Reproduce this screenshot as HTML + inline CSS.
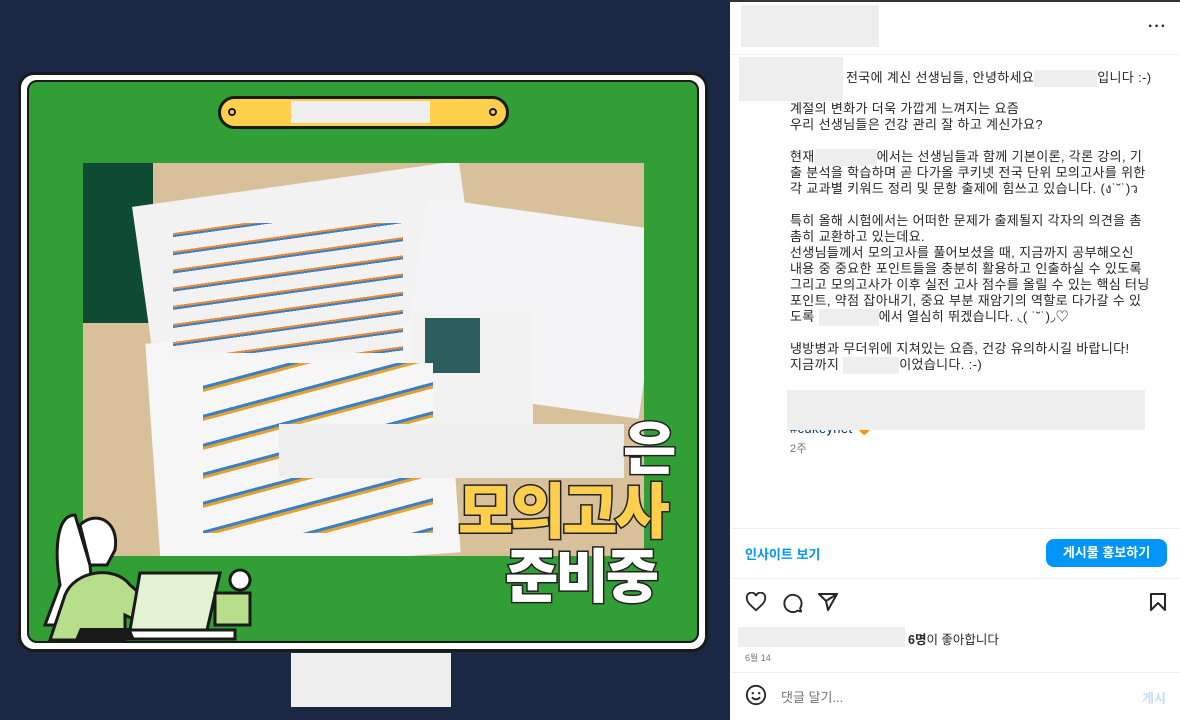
<!DOCTYPE html><html><head><meta charset="utf-8"><style>
*{margin:0;padding:0;box-sizing:border-box}
body{width:1180px;height:720px;overflow:hidden;background:#1b2843;font-family:"Liberation Sans","Noto Sans CJK KR",sans-serif;position:relative}
.a{position:absolute}
.g{background:#eeeeee;position:absolute}
.t{position:absolute;left:790px;font-size:13px;letter-spacing:0.35px;color:#262626;white-space:nowrap;line-height:16px}
.big{position:absolute;font-weight:900;font-family:"Noto Sans CJK KR",sans-serif;-webkit-text-stroke:3px #222;paint-order:stroke fill;line-height:1}
</style></head><body>
<div class="a" style="left:18px;top:72px;width:690px;height:580px;background:#fff;border:3px solid #1a1a1a;border-radius:16px"></div>
<div class="a" style="left:27px;top:80px;width:672px;height:563px;background:#319f35;border:2px solid #1a1a1a;border-radius:10px"></div>
<div class="a" style="left:218px;top:96px;width:291px;height:33px;background:#fecf4d;border:3px solid #1a1a1a;border-radius:17px"></div>
<div class="a" style="left:228px;top:108px;width:8px;height:8px;border:2px solid #1a1a1a;border-radius:50%"></div>
<div class="a" style="left:489px;top:108px;width:8px;height:8px;border:2px solid #1a1a1a;border-radius:50%"></div>
<div class="g" style="left:291px;top:101px;width:139px;height:22px"></div>
<div class="a" style="left:83px;top:163px;width:561px;height:393px;background:#d7c09a;overflow:hidden">
 <div class="a" style="left:0;top:0;width:70px;height:160px;background:#0f4a33"></div>
 <div class="a" style="left:60px;top:20px;width:330px;height:180px;background:#f2f2f2;transform:rotate(-8deg)"></div>
 <div class="a" style="left:70px;top:170px;width:300px;height:230px;background:#f6f6f6;transform:rotate(-4deg)"></div>
 <div class="a" style="left:330px;top:50px;width:240px;height:190px;background:#f4f4f6;transform:rotate(8deg)"></div>
 <div class="a" style="left:330px;top:150px;width:120px;height:130px;background:#f2f2f2"></div>
 <div class="a" style="left:342px;top:155px;width:55px;height:55px;background:#2b5d5d"></div>
 <div class="a" style="left:90px;top:60px;width:230px;height:130px;background:repeating-linear-gradient(172deg,#f2f2f2 0 10px,#e88a3a 10px 12px,#3b7fc4 12px 14px,#f2f2f2 14px 18px)"></div>
 <div class="a" style="left:120px;top:200px;width:230px;height:170px;background:repeating-linear-gradient(165deg,#f6f6f6 0 22px,#3b7fc4 22px 25px,#e3a130 25px 28px)"></div>
</div>
<div class="g" style="left:279px;top:424px;width:345px;height:54px"></div>
<div class="big" style="left:623px;top:415px;font-size:58px;color:#fff">은</div>
<div class="big" style="left:458px;top:478px;font-size:60px;color:#fecf4d;letter-spacing:-3px">모의고사</div>
<div class="big" style="left:505px;top:543px;font-size:58px;color:#fff;letter-spacing:-3px">준비중</div>
<svg class="a" style="left:35px;top:505px" width="230" height="140" viewBox="0 0 230 140">
<path d="M40 10 C20 10 20 50 25 80 L10 120 L60 120 L55 60 Z" fill="#fff" stroke="#1a1a1a" stroke-width="3"/>
<path d="M45 20 C60 5 85 15 80 45 L72 60 L55 60 Z" fill="#fff" stroke="#1a1a1a" stroke-width="3"/>
<path d="M30 90 C40 65 80 60 95 80 L130 110 L120 125 L90 110 L90 135 L15 135 Z" fill="#b7df8b" stroke="#1a1a1a" stroke-width="3"/>
<path d="M105 68 L185 68 L172 125 L95 125 Z" fill="#e2f3d4" stroke="#1a1a1a" stroke-width="3"/>
<path d="M80 125 L200 125 L200 134 L80 134 Z" fill="#fff" stroke="#1a1a1a" stroke-width="3"/>
<path d="M180 88 L215 88 L215 120 L180 120 Z" fill="#b7df8b" stroke="#1a1a1a" stroke-width="3"/>
<circle cx="205" cy="75" r="10" fill="#fff" stroke="#1a1a1a" stroke-width="3"/>
<path d="M40 135 L45 123 L95 123 L100 135Z" fill="#1a1a1a"/>
</svg>
<div class="g" style="left:291px;top:653px;width:160px;height:54px"></div>
<div class="a" style="left:730px;top:0;width:450px;height:720px;background:#fff"></div>
<div class="a" style="left:730px;top:0;width:450px;height:2px;background:#333"></div>
<div class="g" style="left:741px;top:5px;width:138px;height:42px"></div>
<div class="a" style="left:1148px;top:18px;font-size:16px;font-weight:bold;letter-spacing:1px;color:#262626">···</div>
<div class="a" style="left:731px;top:54px;width:449px;height:1px;background:#efefef"></div>
<div class="g" style="left:739px;top:57px;width:104px;height:44px"></div>
<div class="t" style="left:846px;top:70px">전국에 계신 선생님들, 안녕하세요<span style="display:inline-block;width:63px;height:17px;background:#eee;vertical-align:middle"></span>입니다 :-)</div>
<div class="t" style="top:101px">계절의 변화가 더욱 가깝게 느껴지는 요즘</div>
<div class="t" style="top:117px">우리 선생님들은 건강 관리 잘 하고 계신가요?</div>
<div class="t" style="top:149px">현재<span style="display:inline-block;width:62px;height:17px;background:#eee;vertical-align:middle"></span>에서는 선생님들과 함께 기본이론, 각론 강의, 기</div>
<div class="t" style="top:165px">출 분석을 학습하며 곧 다가올 쿠키넷 전국 단위 모의고사를 위한</div>
<div class="t" style="top:181px">각 교과별 키워드 정리 및 문항 출제에 힘쓰고 있습니다. (ง˙˘˙)ว</div>
<div class="t" style="top:213px">특히 올해 시험에서는 어떠한 문제가 출제될지 각자의 의견을 촘</div>
<div class="t" style="top:229px">촘히 교환하고 있는데요.</div>
<div class="t" style="top:245px">선생님들께서 모의고사를 풀어보셨을 때, 지금까지 공부해오신</div>
<div class="t" style="top:261px">내용 중 중요한 포인트들을 충분히 활용하고 인출하실 수 있도록</div>
<div class="t" style="top:277px">그리고 모의고사가 이후 실전 고사 점수를 올릴 수 있는 핵심 터닝</div>
<div class="t" style="top:293px">포인트, 약점 잡아내기, 중요 부분 재암기의 역할로 다가갈 수 있</div>
<div class="t" style="top:309px">도록 <span style="display:inline-block;width:60px;height:17px;background:#eee;vertical-align:middle"></span>에서 열심히 뛰겠습니다. ◟( ˙˘˙)◞♡</div>
<div class="t" style="top:341px">냉방병과 무더위에 지쳐있는 요즘, 건강 유의하시길 바랍니다!</div>
<div class="t" style="top:357px">지금까지 <span style="display:inline-block;width:56px;height:17px;background:#eee;vertical-align:middle"></span>이었습니다. :-)</div>
<div class="t" style="top:421px;color:#00376b">#cukeynet 🧡</div>
<div class="g" style="left:787px;top:390px;width:358px;height:40px"></div>
<div class="t" style="top:441px;font-size:11px;color:#737373">2주</div>
<div class="a" style="left:731px;top:528px;width:449px;height:1px;background:#efefef"></div>
<div class="a" style="left:745px;top:544px;font-size:13px;font-weight:bold;color:#0095f6">인사이트 보기</div>
<div class="a" style="left:1046px;top:539px;width:121px;height:28px;background:#0095f6;border-radius:8px;color:#fff;font-size:13px;font-weight:bold;text-align:center;line-height:28px">게시물 홍보하기</div>
<div class="a" style="left:731px;top:578px;width:449px;height:1px;background:#efefef"></div>
<svg class="a" style="left:745px;top:592px" width="22" height="20" viewBox="0 0 24 22"><path d="M12 20 C5 14 2 11 2 7 A5 5 0 0 1 12 4.5 A5 5 0 0 1 22 7 C22 11 19 14 12 20Z" fill="none" stroke="#262626" stroke-width="2"/></svg>
<svg class="a" style="left:781px;top:592px" width="22" height="21" viewBox="0 0 22 22"><path d="M19.5 17 A9 9 0 1 0 17 19.5 L20.5 20.5Z" fill="none" stroke="#262626" stroke-width="2" stroke-linejoin="round"/></svg>
<svg class="a" style="left:817px;top:592px" width="22" height="20" viewBox="0 0 22 20"><path d="M2 2 L20 2 L11 18 L9 9 Z M9 9 L20 2" fill="none" stroke="#262626" stroke-width="2" stroke-linejoin="round"/></svg>
<svg class="a" style="left:1149px;top:592px" width="18" height="20" viewBox="0 0 18 20"><path d="M2 2 H16 V18 L9 11 L2 18Z" fill="none" stroke="#262626" stroke-width="2" stroke-linejoin="round"/></svg>
<div class="g" style="left:738px;top:627px;width:167px;height:20px"></div>
<div class="a" style="left:908px;top:629px;font-size:12.5px;color:#262626"><b>6명</b>이 좋아합니다</div>
<div class="a" style="left:745px;top:651px;font-size:9px;color:#737373">6월 14</div>
<div class="a" style="left:731px;top:672px;width:449px;height:1px;background:#efefef"></div>
<svg class="a" style="left:745px;top:684px" width="22" height="22" viewBox="0 0 24 24"><circle cx="12" cy="12" r="10" fill="none" stroke="#262626" stroke-width="2"/><circle cx="8.5" cy="10" r="1.3" fill="#262626"/><circle cx="15.5" cy="10" r="1.3" fill="#262626"/><path d="M7.5 14.5 Q12 19 16.5 14.5" fill="none" stroke="#262626" stroke-width="2"/></svg>
<div class="a" style="left:781px;top:687px;font-size:13px;color:#737373">댓글 달기...</div>
<div class="a" style="left:1142px;top:688px;font-size:13px;font-weight:bold;color:#c0dffd">게시</div>
</body></html>
